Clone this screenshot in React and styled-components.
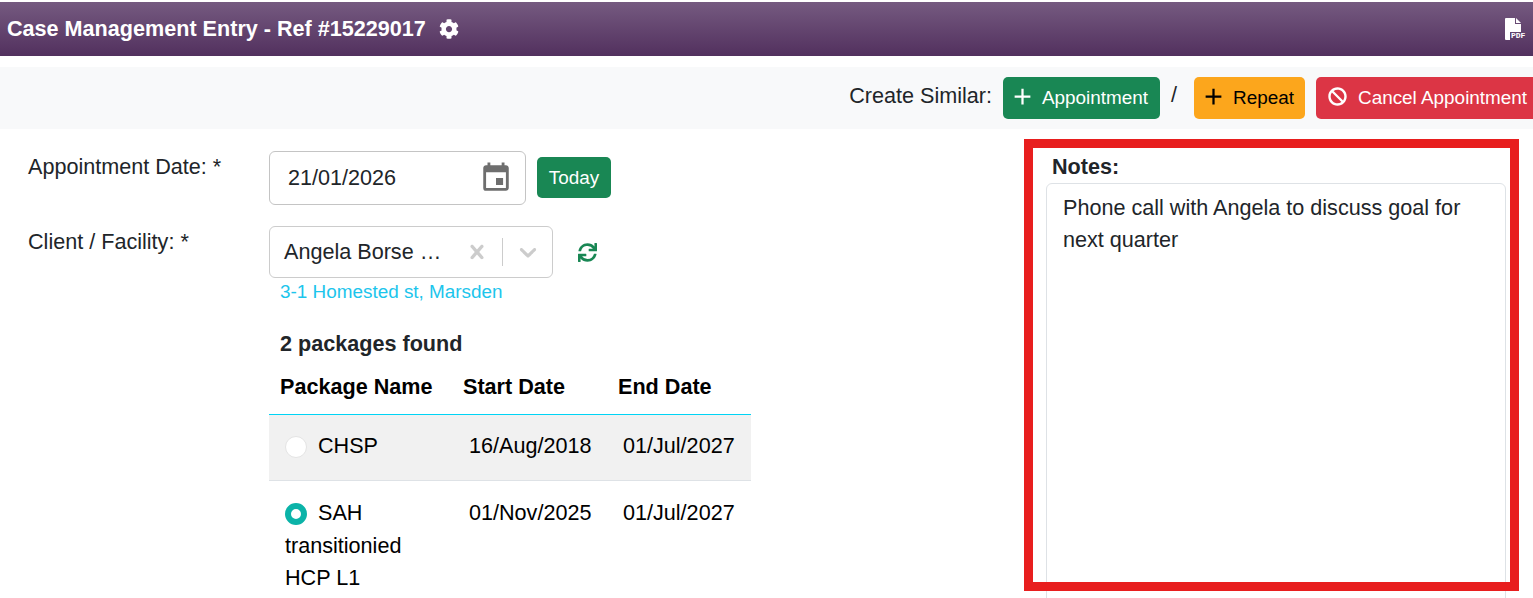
import React from 'react'
import styled, { createGlobalStyle } from 'styled-components'
import { FaBan, FaCog, FaSync } from 'react-icons/fa'
import { MdAdd, MdEvent } from 'react-icons/md'

const GlobalStyle = createGlobalStyle`
    html, body {
        margin: 0;
        padding: 0;
        background: #fff;
        overflow: hidden;
    }
    body {
        font-family: "Liberation Sans", Arial, sans-serif;
        color: #212529;
    }
`

const PACKAGES = [
    { name: 'CHSP', start: '16/Aug/2018', end: '01/Jul/2027', selected: false },
    { name: 'SAH transitionied HCP L1', start: '01/Nov/2025', end: '01/Jul/2027', selected: true },
]

const PdfIcon = () => (
    <PdfSvg viewBox="0 0 21 22">
        <path d="M1 0h9v6h6v8H5v8H1a1 1 0 0 1-1-1V1a1 1 0 0 1 1-1z" fill="#fff" />
        <path d="M11 0l5 5h-5z" fill="#fff" />
        <text x="6" y="20" fontSize="8" fontWeight="700" fontFamily="Liberation Mono, monospace" fill="#fff">PDF</text>
    </PdfSvg>
)

const ClearIcon = () => (
    <SelectSvg viewBox="0 0 20 20">
        <path d="M14.348 14.849c-0.469 0.469-1.229 0.469-1.697 0l-2.651-3.030-2.651 3.029c-0.469 0.469-1.229 0.469-1.697 0-0.469-0.469-0.469-1.229 0-1.697l2.758-3.15-2.759-3.152c-0.469-0.469-0.469-1.228 0-1.697s1.228-0.469 1.697 0l2.652 3.031 2.651-3.031c0.469-0.469 1.228-0.469 1.697 0s0.469 1.229 0 1.697l-2.758 3.152 2.758 3.15c0.469 0.469 0.469 1.229 0 1.698z" />
    </SelectSvg>
)

const ChevronIcon = () => (
    <SelectSvg viewBox="0 0 20 20">
        <path d="M4.516 7.548c0.436-0.446 1.043-0.481 1.576 0l3.908 3.747 3.908-3.747c0.533-0.481 1.141-0.446 1.576 0 0.436 0.445 0.408 1.197 0 1.615-0.406 0.418-4.695 4.502-4.695 4.502-0.217 0.223-0.502 0.335-0.789 0.335s-0.572-0.112-0.789-0.335c0 0-4.287-4.084-4.695-4.502s-0.436-1.17 0-1.615z" />
    </SelectSvg>
)

const App = () => (
    <Page>
        <GlobalStyle />
        <Header>
            <Title>
                Case Management Entry - Ref #15229017
                <FaCog size={20} />
            </Title>
            <PdfIcon />
        </Header>

        <Toolbar>
            <SimilarLabel>Create Similar:</SimilarLabel>
            <ActionButton $bg="#198754" $fg="#fff" $width={157}>
                <MdAdd size={27} />
                Appointment
            </ActionButton>
            <Slash>/</Slash>
            <ActionButton $bg="#fca61c" $fg="#000" $width={111}>
                <MdAdd size={27} />
                Repeat
            </ActionButton>
            <CancelButton $bg="#dc3545" $fg="#fff" $width={224}>
                <FaBan size={19} />
                Cancel Appointment
            </CancelButton>
        </Toolbar>

        <Body>
            <FormColumn>
                <FormRow $height={75}>
                    <FieldLabel>Appointment Date: *</FieldLabel>
                    <DateInput>
                        21/01/2026
                        <MdEvent size={34} color="#6e6e6e" />
                    </DateInput>
                    <TodayButton>Today</TodayButton>
                </FormRow>
                <FormRow $height={52}>
                    <FieldLabel>Client / Facility: *</FieldLabel>
                    <SelectBox>
                        <SelectValue>Angela Borse …</SelectValue>
                        <ClearIcon />
                        <SelectDivider />
                        <ChevronIcon />
                    </SelectBox>
                    <RefreshSlot>
                        <FaSync size={19} color="#198754" />
                    </RefreshSlot>
                </FormRow>
                <Address>3-1 Homested st, Marsden</Address>
                <FoundText>2 packages found</FoundText>
                <PackageTable>
                    <colgroup>
                        <col width="183" />
                        <col width="155" />
                        <col width="144" />
                    </colgroup>
                    <thead>
                        <tr>
                            <HeadCell>Package Name</HeadCell>
                            <HeadCell>Start Date</HeadCell>
                            <HeadCell>End Date</HeadCell>
                        </tr>
                    </thead>
                    <tbody>
                        {PACKAGES.map((p) => (
                            <PackageRow key={p.name} $shaded={!p.selected}>
                                <NameCell>
                                    <Radio $selected={p.selected} />
                                    {p.name}
                                </NameCell>
                                <DateCell>{p.start}</DateCell>
                                <DateCell>{p.end}</DateCell>
                            </PackageRow>
                        ))}
                    </tbody>
                </PackageTable>
            </FormColumn>

            <NotesColumn>
                <NotesLabel>Notes:</NotesLabel>
                <NotesBox>Phone call with Angela to discuss goal for next quarter</NotesBox>
            </NotesColumn>
        </Body>

        <Highlight />
    </Page>
)

export default App

const Page = styled.div`
    position: relative;
    display: flex;
    flex-direction: column;
    height: 598px;
    width: 1533px;
    overflow: hidden;
    padding-top: 2px;
    box-sizing: border-box;
`
const Header = styled.div`
    display: flex;
    flex: none;
    align-items: center;
    justify-content: space-between;
    height: 54px;
    padding: 0 7px 0 7px;
    box-sizing: border-box;
    background: linear-gradient(180deg, #755a80 0%, #52305e 100%);
`
const Title = styled.div`
    display: flex;
    align-items: center;
    gap: 13px;
    color: #fff;
    font-size: 21.600px;
    font-weight: 700;
`
const PdfSvg = styled.svg`
    width: 21px;
    height: 22px;
    display: block;
`
const Toolbar = styled.div`
    display: flex;
    flex: none;
    align-items: center;
    justify-content: flex-end;
    height: 62px;
    margin-top: 11px;
    background: #f8f9fa;
    font-size: 21.600px;
`
const SimilarLabel = styled.span`
    margin-right: 11px;
    margin-top: -5px;
`
const Slash = styled.span`
    margin: -6px 17px 0 0;
`
const ActionButton = styled.div`
    display: flex;
    flex: none;
    align-items: center;
    gap: 6px;
    width: ${(p) => p.$width}px;
    height: 42px;
    margin-right: 11px;
    padding-left: 6px;
    box-sizing: border-box;
    border-radius: 5px;
    background: ${(p) => p.$bg};
    color: ${(p) => p.$fg};
    font-size: 18.900px;
    white-space: nowrap;
    svg {
        margin-top: -3px;
    }
`
const CancelButton = styled(ActionButton)`
    gap: 11px;
    margin-right: -7px;
    padding-left: 12px;
`
const Body = styled.div`
    display: flex;
    flex: 1;
    min-height: 0;
    font-size: 21.600px;
`
const FormColumn = styled.div`
    width: 1046px;
    flex: none;
    padding: 22px 0 0 269px;
    box-sizing: border-box;
`
const FormRow = styled.div`
    display: flex;
    align-items: flex-start;
    height: ${(p) => p.$height}px;
`
const FieldLabel = styled.label`
    margin-left: -241px;
    width: 241px;
    flex: none;
    padding-top: 3px;
`
const DateInput = styled.div`
    display: flex;
    align-items: center;
    justify-content: space-between;
    width: 257px;
    height: 54px;
    padding: 0 12px 0 18px;
    box-sizing: border-box;
    border: 1px solid #c4c4c4;
    border-radius: 6px;
`
const TodayButton = styled.div`
    display: flex;
    align-items: center;
    justify-content: center;
    width: 74px;
    height: 41px;
    margin: 6px 0 0 11px;
    border-radius: 5px;
    background: #198754;
    color: #fff;
    font-size: 18.900px;
`
const SelectBox = styled.div`
    display: flex;
    align-items: center;
    width: 284px;
    height: 52px;
    padding: 0 10px 0 14px;
    box-sizing: border-box;
    border: 1px solid #cccccc;
    border-radius: 6px;
`
const SelectValue = styled.span`
    flex: 1;
    white-space: nowrap;
`
const SelectSvg = styled.svg`
    width: 28px;
    height: 28px;
    flex: none;
    fill: #cccccc;
    display: block;
`
const SelectDivider = styled.span`
    width: 1px;
    height: 28px;
    margin: 0 11px 0 11px;
    background: #cccccc;
`
const RefreshSlot = styled.div`
    display: flex;
    align-items: center;
    height: 52px;
    margin-left: 25px;
`
const Address = styled.div`
    margin: 2px 0 0 11px;
    color: #1cc5ec;
    font-size: 18.900px;
    line-height: 24px;
`
const FoundText = styled.div`
    margin: 27px 0 0 11px;
    font-weight: 700;
    line-height: 26px;
`
const PackageTable = styled.table`
    width: 482px;
    table-layout: fixed;
    border-collapse: separate;
    border-spacing: 0;
    margin-top: 6px;
`
const HeadCell = styled.th`
    height: 52px;
    padding: 0 0 3px 11px;
    box-sizing: border-box;
    text-align: left;
    color: #000;
    white-space: nowrap;
    border-bottom: 1px solid #00d4f5;
`
const PackageRow = styled.tr`
    background: ${(p) => (p.$shaded ? '#f1f1f1' : 'transparent')};
    &:last-child td {
        padding-top: 16px;
    }
`
const NameCell = styled.td`
    padding: 15px 16px 18px;
    line-height: 32.400px;
    vertical-align: top;
    color: #000;
    border-bottom: 1px solid #dee2e6;
`
const DateCell = styled.td`
    padding: 15px 0 18px 17px;
    line-height: 32.400px;
    vertical-align: top;
    color: #000;
    white-space: nowrap;
    border-bottom: 1px solid #dee2e6;
    &:last-child {
        padding-left: 16px;
    }
`
const Radio = styled.span`
    display: inline-block;
    width: 22px;
    height: 22px;
    margin-right: 11px;
    vertical-align: -5px;
    box-sizing: border-box;
    border-radius: 50%;
    background: #fff;
    border: ${(p) => (p.$selected ? '6px solid #0bb3a8' : '1px solid #e4e4e4')};
`
const NotesColumn = styled.div`
    flex: 1;
    display: flex;
    flex-direction: column;
    padding: 22px 27px 0 0;
    min-width: 0;
`
const NotesLabel = styled.div`
    margin-left: 6px;
    font-weight: 700;
    line-height: 32px;
`
const NotesBox = styled.div`
    flex: 1;
    padding: 8px 16px;
    margin-bottom: -40px;
    border: 1px solid #dee2e6;
    border-radius: 6px;
    line-height: 32.400px;
`
const Highlight = styled.div`
    position: absolute;
    left: 1024px;
    top: 139px;
    width: 495px;
    height: 452px;
    box-sizing: border-box;
    border: 9px solid #e81e1e;
    pointer-events: none;
`
